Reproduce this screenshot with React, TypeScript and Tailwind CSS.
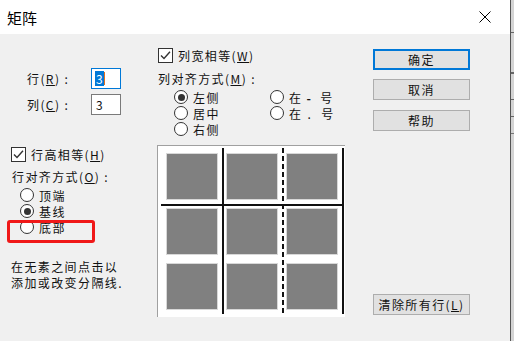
import React from "react";

const font = { fontFamily: '"Noto Sans CJK SC", "Noto Sans", sans-serif' };

const Check = () => (
  <span className="flex h-[15px] w-[15px] shrink-0 items-center justify-center border border-[#333333] bg-white">
    <svg width="13" height="13" viewBox="0 0 13 13">
      <path d="M2 6.5 L5 9.5 L11 2.8" fill="none" stroke="#333333" strokeWidth="1.4" />
    </svg>
  </span>
);

const Radio = ({ on }: { on?: boolean }) => (
  <span className="flex h-[14px] w-[14px] shrink-0 items-center justify-center rounded-full border-[1.5px] border-[#333333] bg-white">
    {on && <span className="h-[7px] w-[7px] rounded-full bg-[#333333]" />}
  </span>
);

const RadioRow = ({ children, on }: { children: React.ReactNode; on?: boolean }) => (
  <div className="flex h-[16px] items-center gap-[5px]">
    <Radio on={on} />
    <span>{children}</span>
  </div>
);

const Btn = ({ children, main }: { children: React.ReactNode; main?: boolean }) => (
  <div
    className={
      "flex h-[21px] w-[97px] items-center justify-center bg-[#e1e1e1] " +
      (main ? "border-2 border-[#0078d7]" : "border border-[#adadad]")
    }
  >
    {children}
  </div>
);

const Cell = () => <div className="h-[47px] w-[52px] border border-[#d8d8d8] bg-[#808080]" />;

const App = () => {
  return (
    <div
      className="flex h-[341px] w-[514px] text-[12px] leading-[15px] tracking-[1.4px] text-[#111111]"
      style={font}
    >
      <div className="flex w-[510px] flex-col">
        {/* title bar */}
        <div className="flex h-[34px] items-center justify-between bg-white pl-[7px] pr-[19px]">
          <span className="text-[15px] tracking-normal text-black">矩阵</span>
          <svg width="12" height="12" viewBox="0 0 12 12">
            <path d="M0.5 0.5 L11.5 11.5 M11.5 0.5 L0.5 11.5" stroke="#000" strokeWidth="1" />
          </svg>
        </div>

        <div className="flex flex-1 bg-[#f0f0f0]">
          {/* left column */}
          <div className="relative flex w-[150px] flex-col">
            <div className="mt-[34px] flex flex-col gap-[5px] pl-[27px]">
              <div className="flex h-[21px] items-center">
                <span className="w-[64px]">
                  行(<u>R</u>) :
                </span>
                <div className="flex h-[21px] w-[30px] items-center border border-[#0078d7] bg-white pl-[3px] tracking-normal">
                  <span className="bg-[#0078d7] px-[1px] text-white">3</span>
                  <span className="h-[13px] w-[1px] bg-[#e07020]" />
                </div>
              </div>
              <div className="flex h-[21px] items-center">
                <span className="w-[64px]">
                  列(<u>C</u>) :
                </span>
                <div className="flex h-[21px] w-[30px] items-center border border-[#7a7a7a] bg-white pl-[4px] tracking-normal">
                  3
                </div>
              </div>
            </div>

            <div className="mt-[31px] flex h-[16px] items-center gap-[5px] pl-[11px]">
              <Check />
              <span>
                行高相等(<u>H</u>)
              </span>
            </div>
            <div className="mt-[7px] h-[15px] pl-[12px]">
              行对齐方式(<u>O</u>) :
            </div>
            <div className="mt-[3px] flex flex-col pl-[20px]">
              <RadioRow>顶端</RadioRow>
              <RadioRow on>基线</RadioRow>
              <RadioRow>底部</RadioRow>
            </div>

            <div className="mt-[24px] flex flex-col pl-[11px]">
              <div className="h-[16px] leading-[16px]">在无素之间点击以</div>
              <div className="h-[16px] leading-[16px]">添加或改变分隔线.</div>
            </div>

            {/* annotation box */}
            <div className="absolute left-[7px] top-[186px] h-[23px] w-[88px] rounded-[3px] border-[3px] border-[#f01818]" />
          </div>

          {/* middle column */}
          <div className="ml-[7px] flex w-[188px] flex-col">
            <div className="mt-[13px] flex h-[16px] items-center gap-[5px] pl-[1px]">
              <Check />
              <span>
                列宽相等(<u>W</u>)
              </span>
            </div>
            <div className="mt-[8px] h-[15px] pl-[1px]">
              列对齐方式(<u>M</u>) :
            </div>
            <div className="mt-[3px] flex pl-[17px]">
              <div className="flex w-[96px] flex-col">
                <RadioRow on>左侧</RadioRow>
                <RadioRow>居中</RadioRow>
                <RadioRow>右侧</RadioRow>
              </div>
              <div className="flex flex-col">
                <RadioRow>
                  在<span className="mx-[4px] font-bold">-</span> 号
                </RadioRow>
                <RadioRow>
                  在<span className="mx-[5px]">.</span> 号
                </RadioRow>
              </div>
            </div>

            {/* preview panel */}
            <div className="relative mt-[8px] h-[172px] w-[188px] border-l border-t border-[#a0a0a0] bg-white">
              <div className="grid grid-cols-[52px_52px_52px] gap-[8px] pl-[8px] pt-[7px]">
                <Cell />
                <Cell />
                <Cell />
                <Cell />
                <Cell />
                <Cell />
                <Cell />
                <Cell />
                <Cell />
              </div>
              <div className="absolute left-[64px] top-[2px] h-[166px] w-[2px] bg-[#111111]" />
              <div className="absolute left-[124px] top-[2px] h-[166px] w-[2px] bg-[repeating-linear-gradient(to_bottom,#111_0px,#111_5px,transparent_5px,transparent_8px)]" />
              <div className="absolute left-[184px] top-[2px] h-[166px] w-[2px] bg-[#111111]" />
              <div className="absolute left-[3px] top-[58px] h-[2px] w-[183px] bg-[#111111]" />
            </div>
          </div>

          {/* right column */}
          <div className="ml-[28px] flex flex-col pb-[26px]">
            <div className="mt-[15px]">
              <Btn main>确定</Btn>
            </div>
            <div className="mt-[9px]">
              <Btn>取消</Btn>
            </div>
            <div className="mt-[10px]">
              <Btn>帮助</Btn>
            </div>
            <div className="mt-auto">
              <Btn>
                清除所有行(<u>L</u>)
              </Btn>
            </div>
          </div>
        </div>
      </div>

      {/* edge of the window behind */}
      <div className="flex w-[4px] flex-col border-l border-[#555555] bg-[#d4d4d4]">
        <div className="h-[32px]" />
        <div className="h-[1px] bg-[#666666]" />
        <div className="h-[39px]" />
        <div className="h-[2px] bg-[#666666]" />
        <div className="h-[25px]" />
        <div className="h-[1px] bg-[#666666]" />
        <div className="h-[16px]" />
        <div className="h-[1px] bg-[#666666]" />
        <div className="h-[16px]" />
        <div className="h-[1px] bg-[#777777]" />
      </div>
    </div>
  );
};

export default App;
